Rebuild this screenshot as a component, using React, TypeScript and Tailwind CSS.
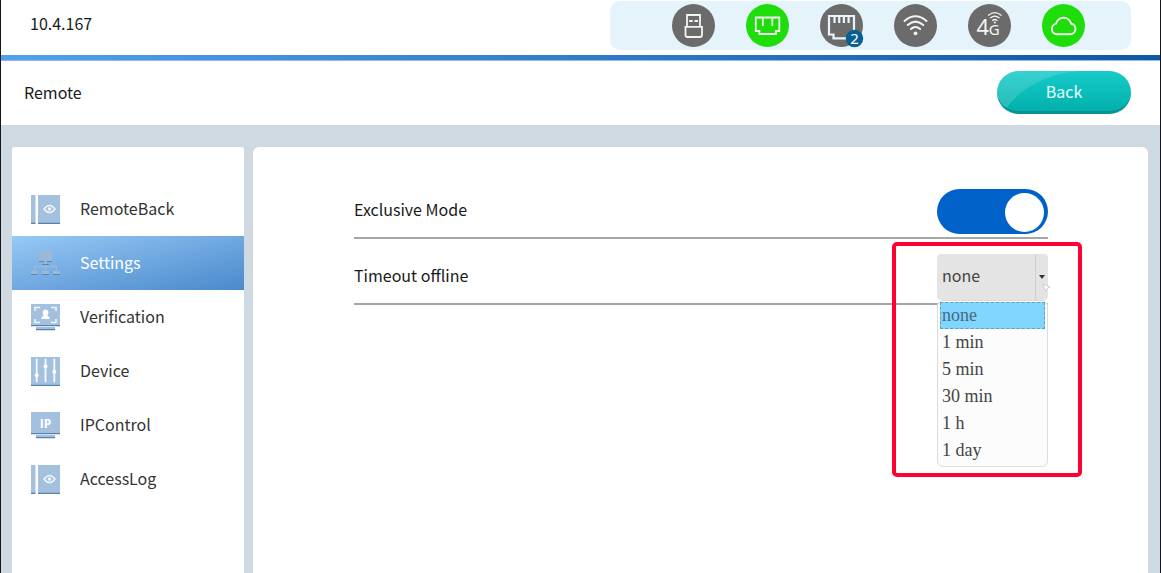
import { useState } from 'react'
import type { ReactNode } from 'react'
import clsx from 'clsx'

const OPTIONS = ['none', '1 min', '5 min', '30 min', '1 h', '1 day']

function StatusIcon({ label, online = false, children }: { label: string; online?: boolean; children: ReactNode }) {
  return (
    <li className="size-[43px]">
      <svg
        viewBox="0 0 43 43"
        role="img"
        aria-label={label}
        className={clsx('size-full rounded-full', online ? 'bg-[#1fdd0b]' : 'bg-[#6b6b6b]')}
        fill="none"
        stroke="#f2f5f2"
        strokeWidth="1.8"
      >
        {children}
      </svg>
    </li>
  )
}

function StatusBar() {
  return (
    <ul className="flex items-center gap-[31px] rounded-[10px] bg-[#e5f3fb] py-[3px] pr-[46px] pl-[62px]">
      <StatusIcon label="USB">
        <path d="M15 22.5V11h13v11.500M13.500 22.800h16.500v8.200q0 2-2 2H15.500q-2 0-2-2z" />
        <path d="M17.200 17h3.500M22.500 17h3.500" />
      </StatusIcon>
      <StatusIcon label="Ethernet 1" online>
        <path d="M9.800 13.500h23.500v13.500h-3.300v3H13.400v-3H9.800zM16.800 14v8M26.300 14v8" />
      </StatusIcon>
      <li className="size-[43px]">
        <svg viewBox="0 0 43 43" role="img" aria-label="Ethernet 2" className="size-full overflow-visible">
          <circle cx="21.5" cy="21.5" r="21.5" fill="#6b6b6b" />
          <path
            d="M9 12h25v18.5h-4v3.800H13.500v-3.800H9zM14.500 12v7M19.200 12v7M23.900 12v7M28.600 12v7"
            fill="none"
            stroke="#eaf3fa"
            strokeWidth="2.2"
          />
          <circle cx="34.500" cy="34.500" r="8.700" fill="#075f94" />
          <text x="34.500" y="40" fill="#fff" fontSize="15" textAnchor="middle" className="font-['Noto_Sans',sans-serif]">2</text>
        </svg>
      </li>
      <StatusIcon label="Wi-Fi">
        <g strokeWidth="2" strokeLinecap="round">
          <path d="M10.500 17q11-9.400 22 0M13.700 21q7.800-6.800 15.600 0M16.900 25q4.600-4 9.200 0" />
        </g>
        <circle cx="21.5" cy="29.300" r="1.900" fill="#f2f5f2" stroke="none" />
      </StatusIcon>
      <StatusIcon label="Mobile network">
        <g fill="#f2f5f2" stroke="none" className="font-['Noto_Sans',sans-serif]">
          <text x="8.500" y="31" fontSize="22">4</text>
          <text x="20.800" y="31" fontSize="15">G</text>
        </g>
        <g strokeWidth="1.300" strokeLinecap="round">
          <path d="M20.500 11.200q6.300-5 12.600 0M22.600 13.800q4.200-3.400 8.400 0M24.600 16.400q2.200-1.800 4.400 0" />
        </g>
        <circle cx="26.800" cy="18.400" r="1" fill="#f2f5f2" stroke="none" />
      </StatusIcon>
      <StatusIcon label="Cloud" online>
        <path
          d="M15 30.200a5.200 5.200 0 0 1-1-10.300a7.800 7.800 0 0 1 15.200-.2a5.300 5.300 0 0 1-.7 10.500z"
          strokeWidth="1.900"
          strokeLinejoin="round"
        />
      </StatusIcon>
    </ul>
  )
}

function BookIcon() {
  return (
    <svg viewBox="0 0 29 29" className="size-[29px]" aria-hidden="true">
      <path d="M0 0h4.500v29H0zM7 0h22v29H7z" fill="#a3c0df" />
      <path d="M0 27.800h4.500V29H0zM7 27.800h22V29H7z" fill="#5683ad" />
      <path d="M13 14q5.500-7.200 11 0q-5.500 7.200-11 0z" fill="none" stroke="#eef5fb" strokeWidth="1.500" />
      <circle cx="18.500" cy="14" r="1.800" fill="#eef5fb" />
    </svg>
  )
}

function NetworkIcon() {
  return (
    <svg viewBox="0 0 29 29" className="size-[29px]" aria-hidden="true">
      <path d="M8 2h13v11H8zM0 22h7v4H0zM11 22h7v4h-7zM22 22h7v4h-7z" fill="#9bb8d6" />
      <path d="M14.500 13v9M3.500 22v-4.500h22V22" fill="none" stroke="#9bb8d6" strokeWidth="1.300" />
      <path d="M8 12h5v1H8zM16 12h5v1h-5zM11 15h7v1h-7zM0 25h7v1H0zM11 25h7v1h-7zM22 25h7v1h-7z" fill="#5e86ab" />
    </svg>
  )
}

function FaceIcon() {
  return (
    <svg viewBox="0 0 29 29" className="size-[29px]" aria-hidden="true">
      <path d="M0 1h29v22H0zM5 24h19v3H5z" fill="#a3c0df" />
      <path d="M0 22h29v1.200H0zM5 26h19v1.200H5z" fill="#5683ad" />
      <path d="M4 8V4.500h5M20 4.500h5V8M4 16v3.500h5M20 19.500h5V16" fill="none" stroke="#eef5fb" strokeWidth="1.700" />
      <path d="M14.500 6.500a3 3 0 0 1 2 5.200v1.200l2 1.200V16h-8v-1.900l2-1.200v-1.200a3 3 0 0 1 2-5.200z" fill="#fff" />
    </svg>
  )
}

function SlidersIcon() {
  return (
    <svg viewBox="0 0 29 29" className="size-[29px]" aria-hidden="true">
      <path d="M0 0h29v29H0z" fill="#a3c0df" />
      <path d="M0 27.800h29V29H0z" fill="#5683ad" />
      <path d="M5.700 2.500v22M14.500 2.500v22M23.300 2.500v22" stroke="#f4f9fd" strokeWidth="1.800" strokeLinecap="round" />
      <g fill="#fff">
        <circle cx="5.700" cy="18.300" r="2" />
        <circle cx="14.500" cy="9.300" r="2" />
        <circle cx="23.300" cy="14.700" r="2" />
      </g>
    </svg>
  )
}

function IpIcon() {
  return (
    <svg viewBox="0 0 29 29" className="size-[29px]" aria-hidden="true">
      <path d="M0 1h29v22H0zM5 24h19v3H5z" fill="#a3c0df" />
      <path d="M0 22h29v1.200H0zM5 26h19v1.200H5z" fill="#5683ad" />
      <text x="14.500" y="16.500" fill="#fff" fontSize="12" fontWeight="700" textAnchor="middle" className="font-['Open_Sans',sans-serif]">IP</text>
    </svg>
  )
}

const NAV = [
  { label: 'RemoteBack', icon: <BookIcon /> },
  { label: 'Settings', icon: <NetworkIcon /> },
  { label: 'Verification', icon: <FaceIcon /> },
  { label: 'Device', icon: <SlidersIcon /> },
  { label: 'IPControl', icon: <IpIcon /> },
  { label: 'AccessLog', icon: <BookIcon /> },
]

function Sidebar() {
  const [active, setActive] = useState('Settings')

  return (
    <nav className="w-[232px] shrink-0 rounded-t-xs bg-white pt-[35px]">
      {NAV.map((item) => (
        <a
          key={item.label}
          href="#"
          aria-current={active === item.label ? 'page' : undefined}
          onClick={(e) => {
            e.preventDefault()
            setActive(item.label)
          }}
          className={clsx(
            'flex h-[54px] items-center gap-5 pl-[19px]',
            active === item.label
              ? 'bg-linear-to-br from-[#97c9f5] to-[#4a89cc] text-white'
              : 'text-[#333]'
          )}
        >
          {item.icon}
          <span className="pb-0.5">{item.label}</span>
        </a>
      ))}
    </nav>
  )
}

function TimeoutSelect() {
  const [value, setValue] = useState('none')
  const [open, setOpen] = useState(true)

  return (
    <div className="relative w-[111px]">
      <select
        id="timeout"
        value={value}
        onMouseDown={(e) => {
          e.preventDefault()
          setOpen(!open)
        }}
        onChange={(e) => setValue(e.target.value)}
        className="block h-[46px] w-full appearance-none rounded-sm bg-[#e4e4e4] pr-4 pb-1 pl-[5px] text-[#444]"
      >
        {OPTIONS.map((o) => (
          <option key={o}>{o}</option>
        ))}
      </select>
      <span className="pointer-events-none absolute inset-y-0 right-0 flex w-[13px] items-center justify-center border-l border-[#cfcfcf]">
        <svg viewBox="0 0 6 4" className="h-1 w-1.5" aria-hidden="true">
          <path d="M0 0h6L3 4z" fill="#333" />
        </svg>
      </span>

      {open && (
        <ul
          role="listbox"
          aria-label="Timeout offline"
          className="absolute top-full left-0 z-10 w-full rounded-md border border-[#dcdcdc] bg-[#fcfcfc] px-0.5 pt-px pb-0.5 font-['Liberation_Serif',serif] text-[18px] leading-[25px] text-[#444]"
        >
          {OPTIONS.map((o) => (
            <li
              key={o}
              role="option"
              aria-selected={o === value}
              onClick={() => {
                setValue(o)
                setOpen(false)
              }}
              className={clsx(
                'border border-dashed pl-px',
                o === value ? 'border-[#6a9db5] bg-[#80d6ff] text-[#486a7c]' : 'border-transparent'
              )}
            >
              {o}
            </li>
          ))}
        </ul>
      )}

      {/* highlight frame */}
      <div className="pointer-events-none absolute -top-3 -right-[34px] z-20 h-[235px] w-[190px] rounded-[5px] border-4 border-[#ff0033]" />

      {/* mouse pointer */}
      <svg viewBox="0 0 10 10" className="pointer-events-none absolute top-[29px] -right-1 z-30 size-2.5" aria-hidden="true">
        <path d="M1 1l7 3-3 1.500-1.500 3z" fill="#fff" stroke="#bbb" strokeWidth=".7" />
      </svg>
    </div>
  )
}

export default function App() {
  const [exclusive, setExclusive] = useState(true)

  return (
    <div className="flex min-h-screen flex-col border-x border-[#15151c] bg-[#cfd9e2] font-['Noto_Sans_CJK_SC',sans-serif] text-[16px] leading-6 text-[#1a1a1a]">
      <header className="bg-white">
        <div className="flex items-start justify-between pt-px pr-[29px] pb-[5px] pl-[29px]">
          <span className="pt-2.5">10.4.167</span>
          <StatusBar />
        </div>
        <div className="h-1.5 border-b border-[#9fb4e2] bg-linear-to-r from-[#4ea2f0] to-[#0c59a6]" />
        <div className="flex h-16 items-center justify-between pr-[29px] pb-px pl-[23px]">
          <h1 className="pb-0.5">Remote</h1>
          <button
            type="button"
            className="relative h-[43px] w-[134px] overflow-hidden rounded-full border-b-3 border-[#0a9394] bg-linear-to-b from-[#15cbc9] to-[#02b0ac] text-[#e6fffd]"
          >
            <svg viewBox="0 0 134 40" className="absolute inset-0 size-full" preserveAspectRatio="none" aria-hidden="true">
              <path d="M0 0h82Q36 4 10 36L0 40z" fill="#fff" fillOpacity=".14" />
            </svg>
            <span className="relative">Back</span>
          </button>
        </div>
      </header>

      <div className="flex flex-1 gap-[9px] pt-[22px] pr-3 pl-[11px]">
        <Sidebar />
        <main className="min-w-0 flex-1 rounded-t-md bg-white pt-[26px] pr-[100px] pl-[101px]">
          <div className="flex h-[66px] items-end justify-between border-b-2 border-[#a6a6a6] pb-[3px]">
            <label htmlFor="exclusive" className="pb-0.5 leading-[45px]">Exclusive Mode</label>
            <span className="relative h-[45px] w-[111px]">
              <input
                id="exclusive"
                type="checkbox"
                role="switch"
                checked={exclusive}
                onChange={(e) => setExclusive(e.target.checked)}
                className="peer block size-full appearance-none rounded-full bg-[#b5b5b5] checked:bg-[#0062c8]"
              />
              <span className="pointer-events-none absolute top-1 left-1 size-[39px] rounded-full bg-white peer-checked:right-1 peer-checked:left-auto" />
            </span>
          </div>
          <div className="flex h-[66px] items-end justify-between border-b-2 border-[#a6a6a6] pb-[3px]">
            <label htmlFor="timeout" className="pb-0.5 leading-[45px]">Timeout offline</label>
            <TimeoutSelect />
          </div>
        </main>
      </div>
    </div>
  )
}
